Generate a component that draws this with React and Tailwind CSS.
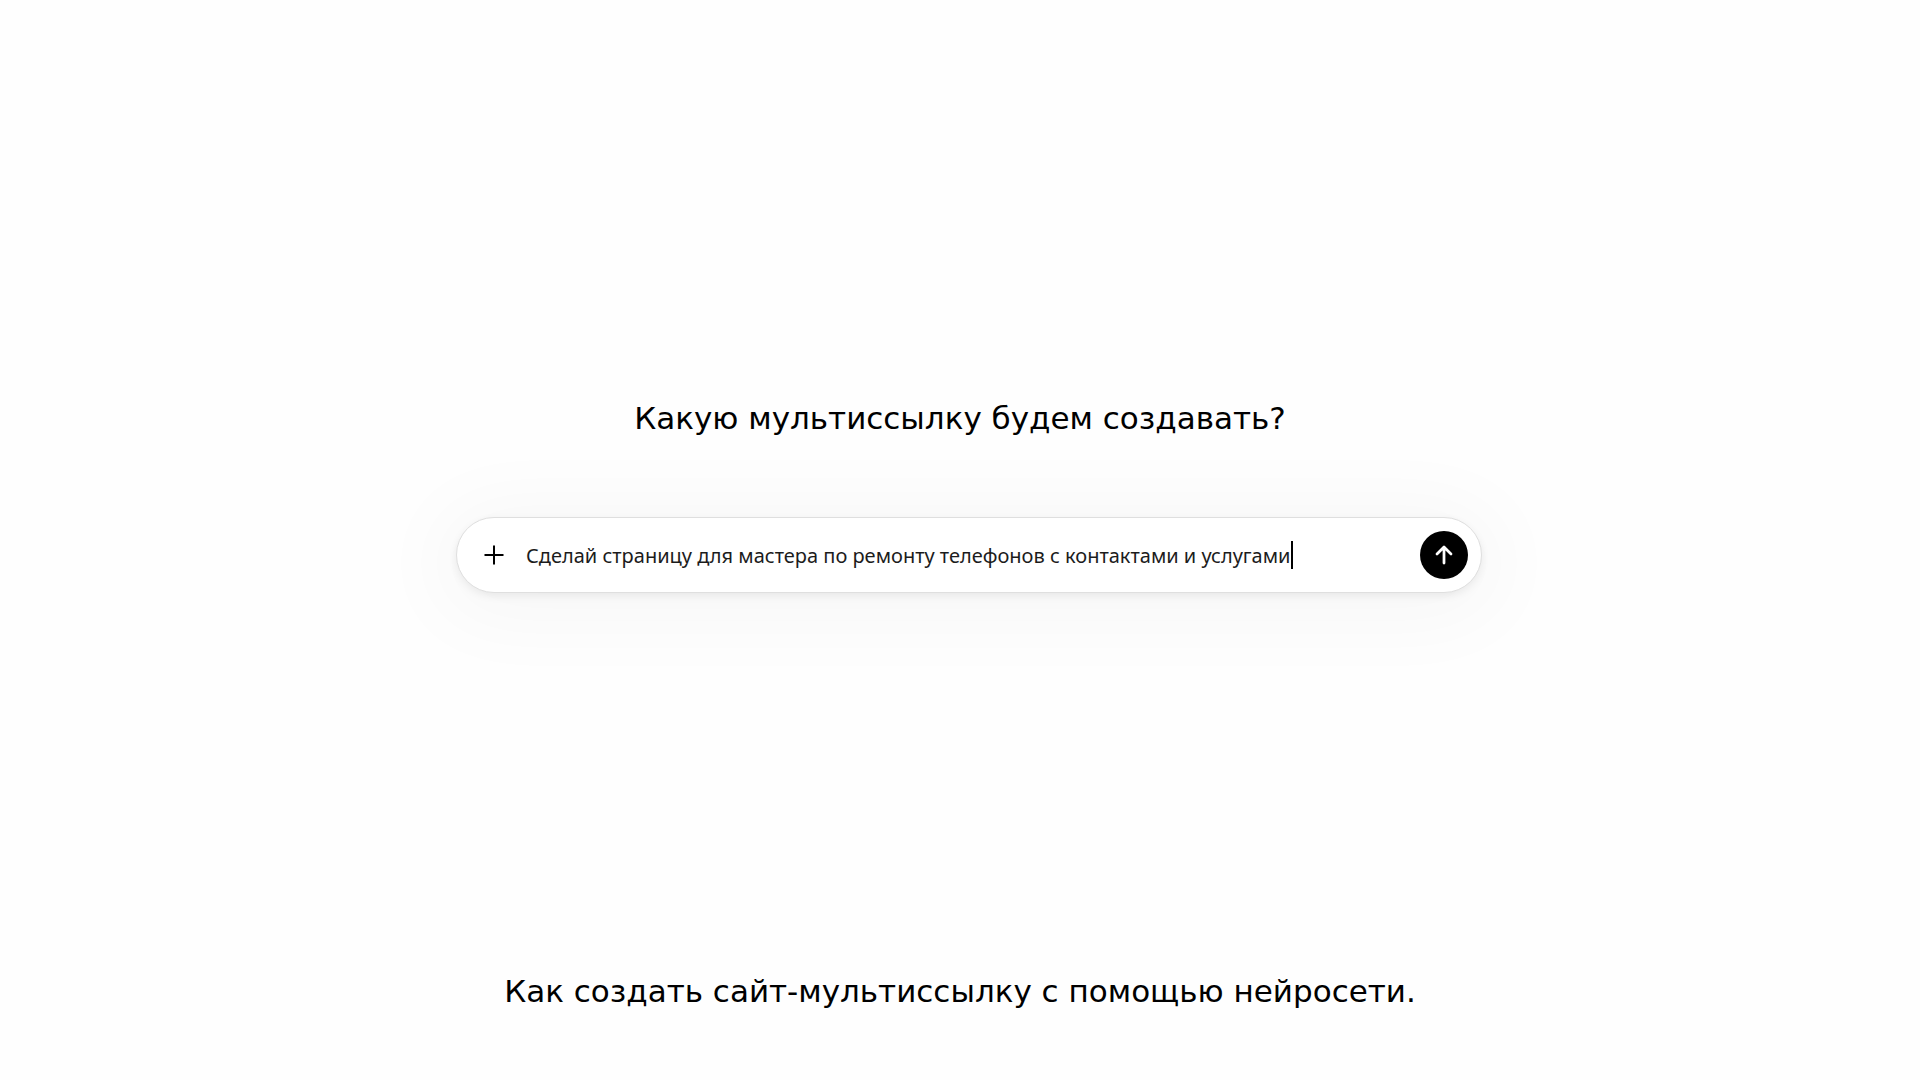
import { useState } from 'react';

export default function App() {
  const [prompt, setPrompt] = useState('Сделай страницу для мастера по ремонту телефонов с контактами и услугами');

  return (
    <main className="min-h-screen flex flex-col items-center bg-[#fefefe] px-6 pt-99 pb-[67px] text-black font-['DejaVu_Sans',sans-serif]">
      <h1 className="text-[31px] leading-11 text-center">Какую мультиссылку будем создавать?</h1>

      {/* Prompt bar */}
      <div className="w-full flex justify-center pl-[18px] mt-[77px]">
        <form
          onSubmit={(e) => e.preventDefault()}
          className="w-full max-w-[1026px] h-19 flex items-center rounded-full border border-[#dfdfdf] bg-white pl-[25px] pr-[13px] shadow-[0_3px_8px_rgba(0,0,0,0.07),0_8px_80px_20px_rgba(0,0,0,0.03)]"
        >
          <button type="button" aria-label="Добавить" className="shrink-0">
            <svg className="size-6" viewBox="0 0 24 24" fill="none" stroke="currentColor" strokeWidth="2">
              <path d="M12 2.5v19M2.5 12h19" />
            </svg>
          </button>
          <div className="flex-1 min-w-0 flex items-center pl-5">
            <input
              type="text"
              aria-label="Запрос"
              value={prompt}
              onChange={(e) => setPrompt(e.target.value)}
              className="field-sizing-content max-w-full h-8 text-xl text-[#1c1c1c] outline-none caret-transparent font-['Noto_Sans',sans-serif]"
            />
            <span className="w-0.5 h-7 shrink-0 bg-black" />
          </div>
          <button type="submit" aria-label="Отправить" className="size-12 shrink-0 flex items-center justify-center rounded-full bg-black text-white">
            <svg className="size-6" viewBox="0 0 24 24" fill="none" stroke="currentColor" strokeWidth="2.75" strokeLinecap="round" strokeLinejoin="round">
              <path d="M12 20V4M5 11l7-7 7 7" />
            </svg>
          </button>
        </form>
      </div>

      <p className="mt-auto text-[31px] leading-11 text-center">Как создать сайт-мультиссылку с помощью нейросети.</p>
    </main>
  );
}
